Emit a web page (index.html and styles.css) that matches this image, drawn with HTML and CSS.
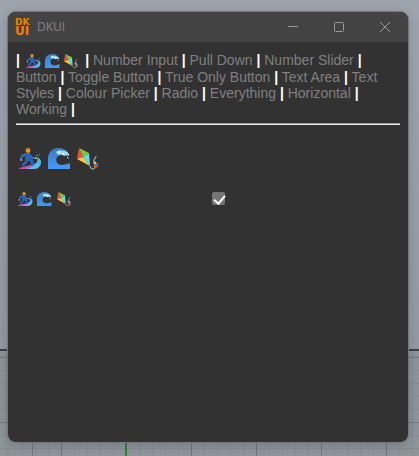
FILE: index.html
```
<!DOCTYPE html>
<html lang="en">
<head>
    <meta charset="UTF-8">
    <meta name="viewport" content="width=device-width, initial-scale=1.0">
    <title>DKUI</title>
    <link rel="stylesheet" href="styles.css">
</head>
<body>
    <!-- Shared icon shapes -->
    <svg class="icon-defs" aria-hidden="true">
        <defs>
            <linearGradient id="waveFill" x1="0" y1="0" x2="0" y2="1">
                <stop offset="0" stop-color="#3d7bc2"/>
                <stop offset="1" stop-color="#4598fa"/>
            </linearGradient>
            <linearGradient id="boardFill" x1="0" y1="0" x2="1" y2="0">
                <stop offset="0" stop-color="#e83c9a"/>
                <stop offset="1" stop-color="#a674d8"/>
            </linearGradient>
            <linearGradient id="splashFill" x1="1" y1="0" x2="0" y2="1">
                <stop offset="0" stop-color="#38bce8"/>
                <stop offset="1" stop-color="#78b8f8"/>
            </linearGradient>
        </defs>
        <symbol id="surfer" viewBox="0 0 22 22">
            <path fill="url(#splashFill)" d="M6 21c5-1 8-3 11-6 1-1 2-3 1-5 3 0 4 2 4 4 0 4-3 7-8 7z"/>
            <path fill="url(#boardFill)" d="M0 20c4-1 8-2 12-3l4-2c-1 3-5 5-9 6H1c-1 0-1-1-1-1z"/>
            <path fill="none" stroke="#2d64b4" stroke-width="2.6" stroke-linecap="round" stroke-linejoin="round" d="M8 10l-1 4-3 3M9 11l4 2v4"/>
            <path fill="none" stroke="#3474c8" stroke-width="2" stroke-linecap="round" stroke-linejoin="round" d="M7 6l-4 2-1 3M10 6l3 4 4 0"/>
            <path fill="#2d64b4" d="M7 5h4l1 5-2 3-4-2z"/>
            <circle cx="9" cy="2.5" r="2.4" fill="#e8a02c"/>
            <path fill="#c87818" d="M7 1c1-2 4-1 4 0l-2 1-2 1z"/>
            <circle cx="2" cy="12" r="1" fill="#eda52d"/>
            <circle cx="17" cy="10" r="1" fill="#eda52d"/>
            <path fill="#38a8d8" d="M17 7h2v1h-2zM20 6h1v1h-1zM19 9h1v1h-1z"/>
        </symbol>
        <symbol id="wave" viewBox="0 0 22 22">
            <path fill="url(#waveFill)" d="M0 21V10C0 4 5 0 11 0c5 0 9 3 10 7l-3 1c-3-2-7-1-9 1-2 4 0 7 4 8 3 0 6-1 9-2v6z"/>
            <path fill="#9ad8f2" d="M8 4c3-2 9-2 12 1l1 3-3-1-2 1-2-2-3 1-2-1z"/>
            <path fill="#e4f8ff" d="M10 3h2v2h-2zM14 5h2v2h-2zM18 4h1v1h-1zM20 6h1v1h-1zM19 9h1v1h-1z"/>
            <path fill="#5cadec" d="M20 10h1v1h-1z"/>
        </symbol>
        <symbol id="kite" viewBox="0 0 22 22">
            <path fill="#7ec832" d="M2 0l10 5-6 4z"/>
            <path fill="#ea5140" d="M2 0l4 9-6 2z"/>
            <path fill="#ffc83d" d="M0 11l6-2 7 9z"/>
            <path fill="#62dde4" d="M12 5l1 13-7-9z"/>
            <path fill="none" stroke="#b4acbc" stroke-width="1" d="M13 18c1 4 6 4 5-1l-1-5c0-2 2-1 2-4"/>
            <path fill="#38a0dc" d="M16 12l3 2-3 2z"/>
            <path fill="#ffc83d" d="M17 14h2v2h-2z"/>
            <path fill="#e64c58" d="M16 17l2 1 3-1v2l-3 1z"/>
            <path fill="#4477d8" d="M19 15h2v2h-2z"/>
        </symbol>
    </svg>

    <!-- Viewport grid behind the window -->
    <div class="ground"></div>

    <div class="window">
        <header class="titlebar">
            <span class="logo" aria-hidden="true"><b class="logo-top">DK</b><b class="logo-bottom">UI</b></span>
            <span class="title">DKUI</span>
            <button class="window-btn" type="button" aria-label="Minimize">
                <svg width="10" height="10" viewBox="0 0 10 10"><path d="M0 4.5h10"/></svg>
            </button>
            <button class="window-btn" type="button" aria-label="Maximize">
                <svg width="10" height="10" viewBox="0 0 10 10"><rect x="0.5" y="0.5" width="9" height="9" rx="1"/></svg>
            </button>
            <button class="window-btn" type="button" aria-label="Close">
                <svg width="10" height="10" viewBox="0 0 10 10"><path d="M0 0l10 10M10 0L0 10"/></svg>
            </button>
        </header>

        <main class="content">
            <nav>
                <b>|</b> <a href="#home" class="emojis" aria-label="Home"><svg><use href="#surfer"/></svg><svg><use href="#wave"/></svg><svg><use href="#kite"/></svg></a>
                <b>|</b> <a href="#number-input">Number Input</a>
                <b>|</b> <a href="#pull-down">Pull Down</a>
                <b>|</b> <a href="#number-slider">Number Slider</a>
                <b>|</b> <a href="#button">Button</a>
                <b>|</b> <a href="#toggle-button">Toggle Button</a>
                <b>|</b> <a href="#true-only-button">True Only Button</a>
                <b>|</b> <a href="#text-area">Text Area</a>
                <b>|</b> <a href="#text-styles">Text Styles</a>
                <b>|</b> <a href="#colour-picker">Colour Picker</a>
                <b>|</b> <a href="#radio">Radio</a>
                <b>|</b> <a href="#everything">Everything</a>
                <b>|</b> <a href="#horizontal">Horizontal</a>
                <b>|</b> <a href="#working">Working</a>
                <b>|</b>
            </nav>
            <hr>
            <h1 class="emojis" aria-label="Surfer, wave, kite"><svg><use href="#surfer"/></svg><svg><use href="#wave"/></svg><svg><use href="#kite"/></svg></h1>
            <div class="row">
                <label for="surfCheck" class="emojis" aria-label="Surfer, wave, kite"><svg><use href="#surfer"/></svg><svg><use href="#wave"/></svg><svg><use href="#kite"/></svg></label>
                <input type="checkbox" id="surfCheck" checked>
            </div>
        </main>
    </div>
</body>
</html>
```

FILE: styles.css
```
* {
    box-sizing: border-box;
}

body {
    display: flex;
    min-height: 100vh;
    margin: 0;
    padding: 12px 11px 14px 8px;
    background: linear-gradient(#9da4ad, #90969f);
    font-family: Arial, "Liberation Sans", sans-serif;
    font-size: 14px;
    line-height: 16px;
    color: white;
}

.icon-defs {
    position: absolute;
    width: 0;
    height: 0;
}

/* Construction plane: horizon, green axis, major lines, minor lines */
.ground {
    position: absolute;
    left: 0;
    right: 0;
    bottom: 0;
    height: 107px;
    border-top: 2px solid #42423f;
    background:
        linear-gradient(#338433, #338433) 125px 0 / 2px 100% no-repeat,
        repeating-linear-gradient(90deg, #72787d 0 1px, transparent 1px 65px) 61px 0,
        repeating-linear-gradient(#72787d 0 1px, transparent 1px 65px) 0 6px,
        repeating-linear-gradient(90deg, #848b92 0 1px, transparent 1px 13px) 9px 0,
        repeating-linear-gradient(#848b92 0 1px, transparent 1px 13px) 0 6px,
        #8d949a;
}

.window {
    position: relative;
    flex: 1;
    display: flex;
    flex-direction: column;
    min-width: 0;
    border-radius: 8px;
    overflow: hidden;
    background: #323232;
    box-shadow: 0 0 0 1px #777, 0 2px 12px rgba(0, 0, 0, 0.2);
}

.titlebar {
    display: flex;
    align-items: center;
    height: 30px;
    padding: 0 0 0 7px;
    background: #434343;
}

.logo {
    display: flex;
    flex-direction: column;
    width: 22px;
    font-family: "DejaVu Sans", sans-serif;
    color: #f58000;
}

.logo-top {
    font-size: 9px;
    line-height: 8px;
}

.logo-bottom {
    font-size: 12px;
    line-height: 10px;
}

.title {
    flex: 1;
    font-family: "Open Sans", sans-serif;
    font-size: 12px;
    color: #858585;
}

.window-btn {
    display: flex;
    align-items: center;
    justify-content: center;
    width: 46px;
    height: 30px;
    padding: 0;
    border: 0;
    background: none;
}

.window-btn svg {
    fill: none;
    stroke: #999;
    overflow: visible;
}

.content {
    flex: 1;
    padding: 10px 8px;
}

a {
    color: #808080;
    text-decoration: none;
}

hr {
    height: 2px;
    margin: 6px 0 20px;
    border: 0;
    border-top: 1px solid #9a9a9a;
    background: #eee;
}

.emojis svg {
    width: 1.05em;
    height: 1.05em;
    margin: 0 0.16em;
    vertical-align: -0.2em;
}

nav .emojis svg {
    vertical-align: -0.26em;
}

h1 {
    margin: 0 0 18px;
    font-size: 21px;
    line-height: 28px;
}

.row {
    display: grid;
    grid-template-columns: 1fr 1fr;
    align-items: start;
}

/* Dark themed checkbox with a white tick */
input[type="checkbox"] {
    appearance: none;
    width: 13px;
    height: 13px;
    margin: 1px 4px;
    border-radius: 2px;
    background: #757575;
}

input[type="checkbox"]:checked::before {
    content: "";
    display: block;
    width: 5px;
    height: 9px;
    margin: 1px 4px;
    border: solid white;
    border-width: 0 2px 2px 0;
    transform: rotate(40deg);
}
```
